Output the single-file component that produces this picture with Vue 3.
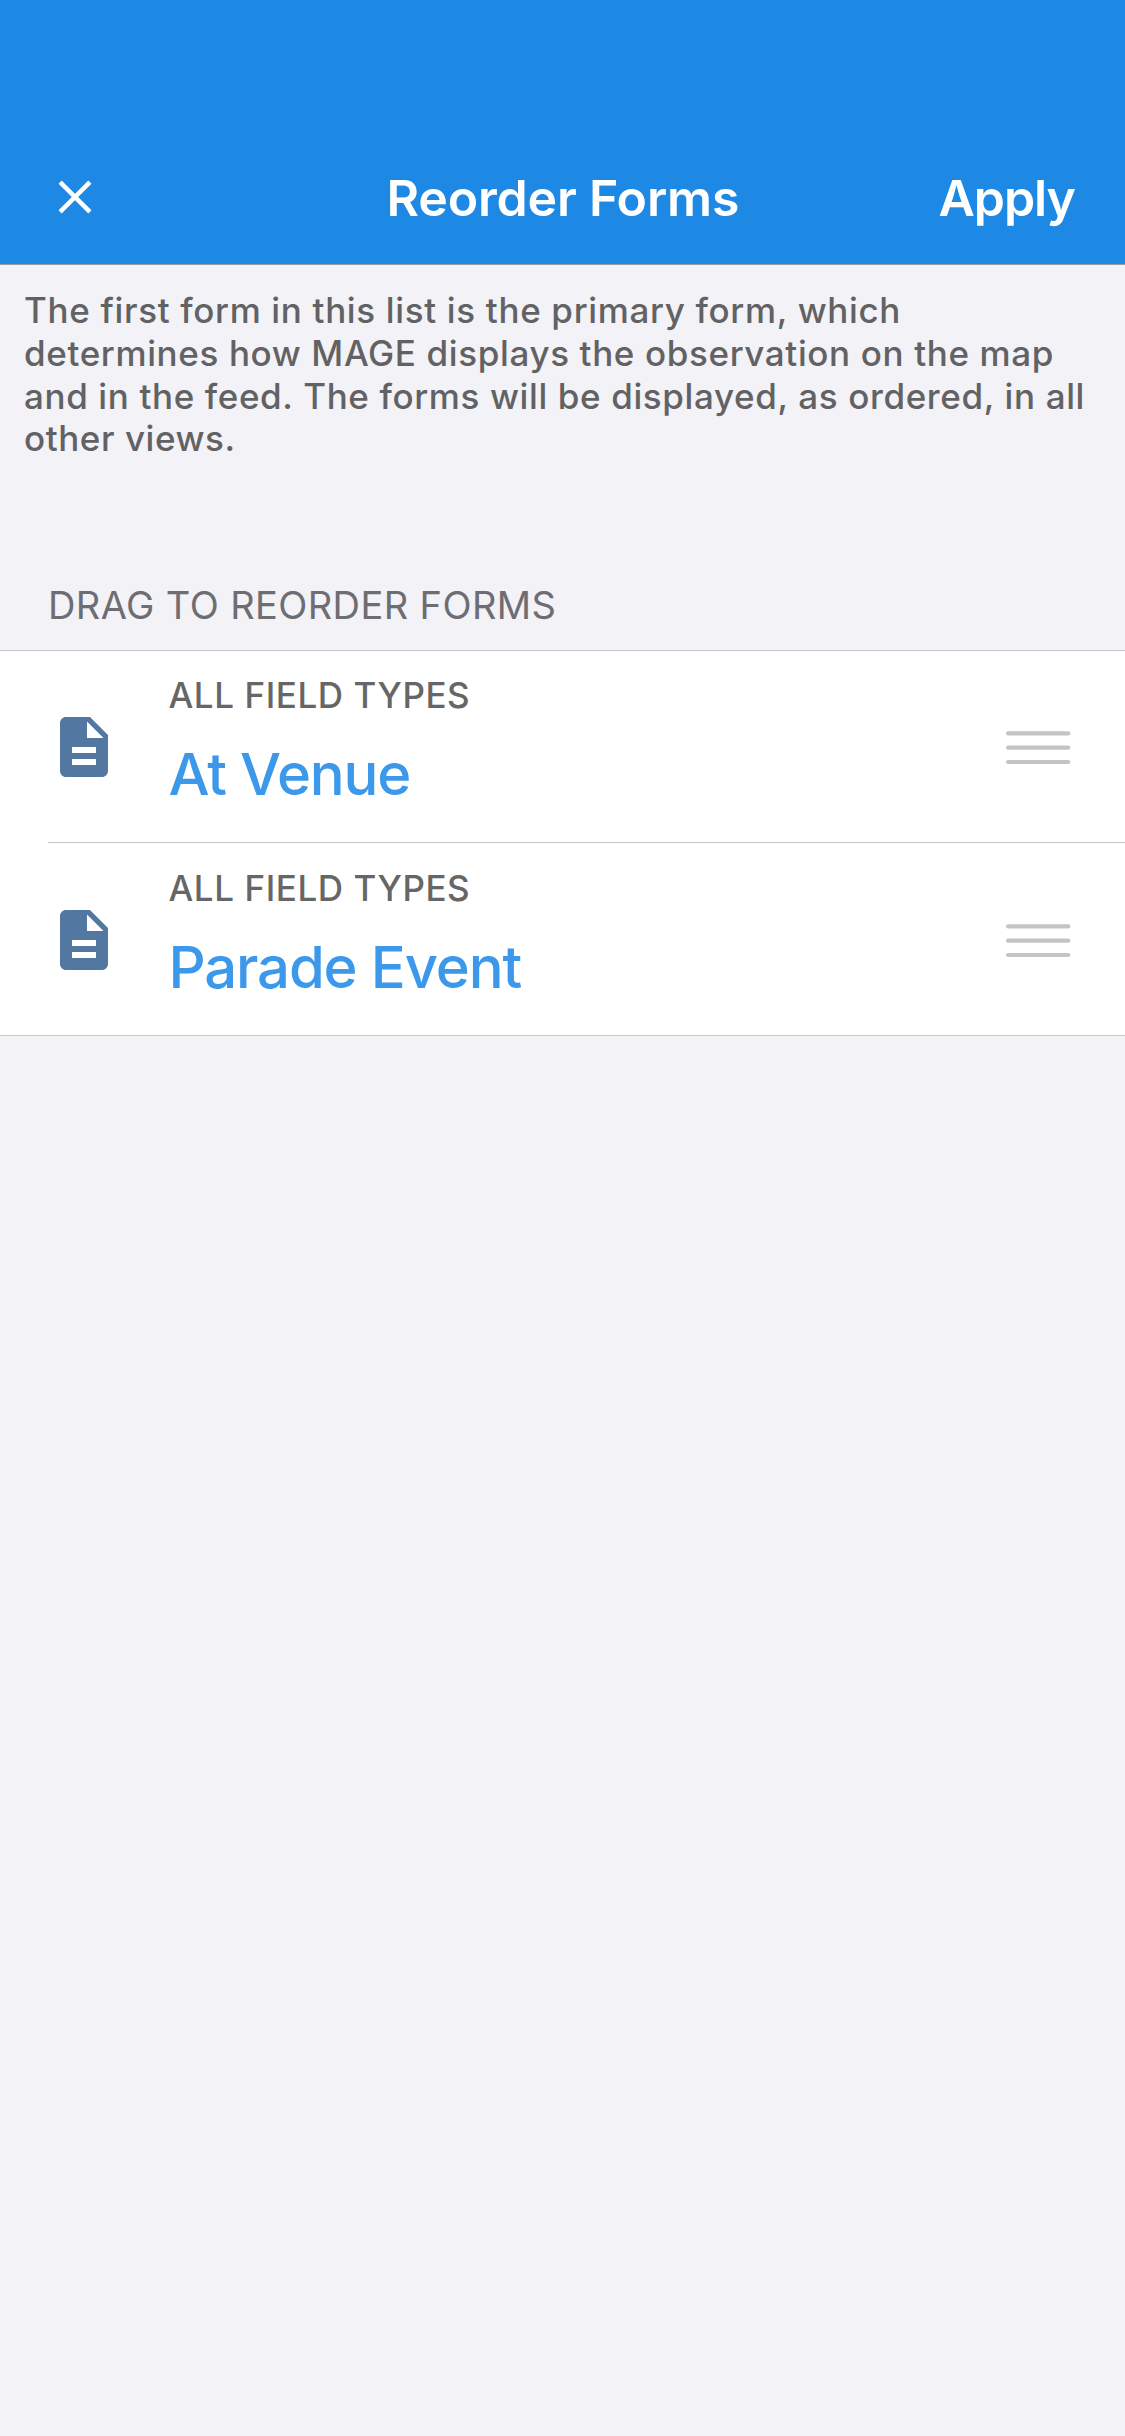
<script setup>
const introLines = [
  { text: 'The first form in this list is the primary form, which', cls: 'l1' },
  { text: 'determines how MAGE displays the observation on the map', cls: 'l2' },
  { text: 'and in the feed. The forms will be displayed, as ordered, in all', cls: 'l3' },
  { text: 'other views.', cls: 'l4' },
]
const forms = [
  { type: 'ALL FIELD TYPES', name: 'At Venue' },
  { type: 'ALL FIELD TYPES', name: 'Parade Event' },
]
</script>

<template>
  <div class="screen">
    <header class="navbar">
      <button class="close" aria-label="Close">
        <svg width="34" height="34" viewBox="0 0 34 34">
          <path d="M2.1 2.1 31.9 31.9M31.9 2.1 2.1 31.9" stroke="#fff" stroke-width="4.4" fill="none" />
        </svg>
      </button>
      <h1 class="title">Reorder Forms</h1>
      <button class="apply">Apply</button>
    </header>

    <p class="intro">
      <span v-for="line in introLines" :key="line.cls" :class="line.cls">{{ line.text }}</span>
    </p>

    <h2 class="section">DRAG TO REORDER FORMS</h2>

    <ul class="forms">
      <li v-for="form in forms" :key="form.name" class="row">
        <svg class="icon" width="72" height="72" viewBox="0 0 24 24">
          <path
            fill="#5278a2"
            d="M14 2H6c-1.1 0-2 .9-2 2v16c0 1.1.9 2 2 2h12c1.1 0 2-.9 2-2V8l-6-6zm2 16H8v-2h8v2zm0-4H8v-2h8v2zm-3-5V3.5L18.5 9H13z"
          />
        </svg>
        <div class="text">
          <span class="type">{{ form.type }}</span>
          <span class="name">{{ form.name }}</span>
        </div>
        <svg class="handle" width="65" height="34" viewBox="0 0 65 34">
          <g fill="#c4c4c6">
            <rect x="0" y="0.3" width="64.3" height="4.2" rx="2" />
            <rect x="0" y="14.6" width="64.3" height="4.2" rx="2" />
            <rect x="0" y="28.9" width="64.3" height="4.2" rx="2" />
          </g>
        </svg>
      </li>
    </ul>
  </div>
</template>

<style>
body {
  background: #f2f2f7;
}
</style>

<style scoped>
.screen {
  box-sizing: border-box;
  width: 1125px;
  height: 2436px;
  overflow: hidden;
  background: #f2f2f7;
  font-family: Inter, 'Liberation Sans', sans-serif;
}
.navbar {
  box-sizing: border-box;
  height: 265px;
  padding-top: 132px;
  display: grid;
  grid-template-columns: 386.5px 552px auto;
  align-items: center;
  justify-content: start;
  background: #1e88e5;
  border-bottom: 1px solid #939da9;
  color: #fff;
}
button {
  border: 0;
  padding: 0;
  background: none;
  color: inherit;
  font-family: inherit;
  text-align: left;
}
.close {
  padding-left: 58px;
  line-height: 0;
  margin-top: -2px;
}
.title,
.apply {
  margin: 0;
  font-size: 50px;
  line-height: 60px;
  font-weight: 600;
  letter-spacing: -0.18px;
  white-space: nowrap;
}
.apply {
  letter-spacing: -1.1px;
}
.intro {
  margin: 0;
  padding: 24px 0 0 24px;
  display: flex;
  flex-direction: column;
  font-size: 35px;
  font-weight: 500;
  line-height: 42.75px;
  color: #626264;
  white-space: nowrap;
}
.l1 {
  letter-spacing: 0.658px;
}
.l2 {
  letter-spacing: 0.625px;
}
.l3 {
  letter-spacing: 0.618px;
}
.l4 {
  letter-spacing: 0.56px;
}
.section {
  margin: 122px 0 22px;
  padding-left: 48px;
  font-size: 38px;
  font-weight: 400;
  line-height: 46px;
  letter-spacing: 0.4px;
  color: #6d6d72;
}
.forms {
  margin: 0;
  padding: 0;
  list-style: none;
  background: #fff;
  box-shadow: inset 0 1px #c6c6c8, inset 0 -1px #c6c6c8;
}
.row {
  box-sizing: border-box;
  height: 193px;
  padding: 24px 54px 0 48px;
  display: flex;
  align-items: flex-start;
}
.row:not(:last-child) {
  background: linear-gradient(#c6c6c8, #c6c6c8) 48px 100% / 100% 1px no-repeat;
}
.icon {
  margin-top: 37px;
  flex: none;
}
.text {
  flex: 1;
  margin-left: 48.5px;
  display: flex;
  flex-direction: column;
  white-space: nowrap;
}
.type {
  font-size: 35px;
  font-weight: 500;
  line-height: 42px;
  letter-spacing: 0.56px;
  color: #666;
}
.name {
  margin-top: 23px;
  font-size: 58px;
  font-weight: 500;
  line-height: 70px;
  letter-spacing: -1.15px;
  color: #3c98ea;
}
.handle {
  margin-top: 57px;
  flex: none;
}
</style>
